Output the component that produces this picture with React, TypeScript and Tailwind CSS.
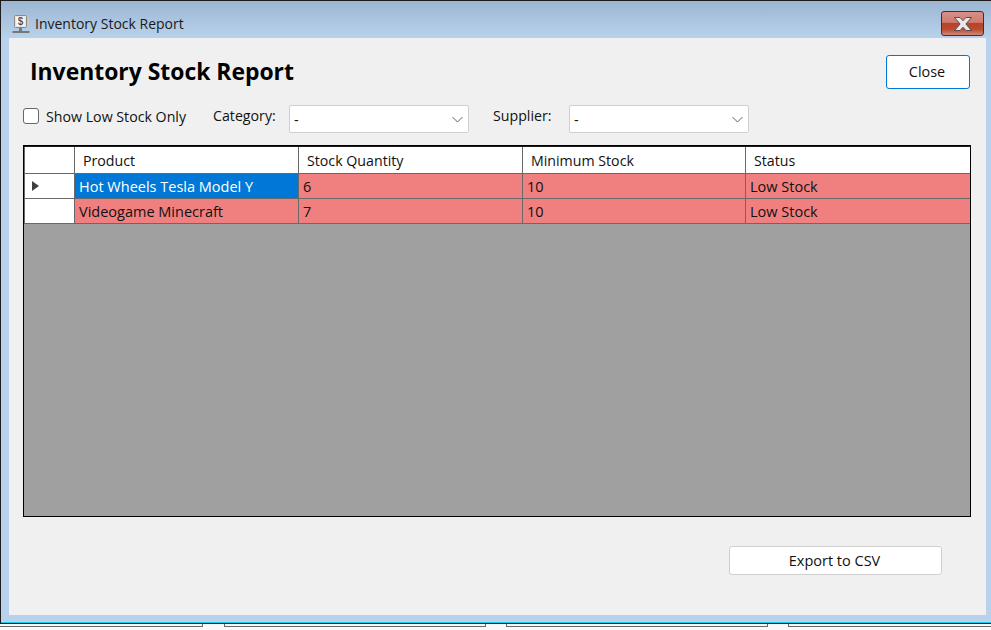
import React from 'react';

const rows = [
  { product: 'Hot Wheels Tesla Model Y', qty: '6', min: '10', status: 'Low Stock', selected: true },
  { product: 'Videogame Minecraft', qty: '7', min: '10', status: 'Low Stock', selected: false },
];

const headers = ['Product', 'Stock Quantity', 'Minimum Stock', 'Status'];
const gridCols = 'grid grid-cols-[51px_224px_224px_223px_224px]';

const AppIcon = () => (
  <svg width="18" height="19" viewBox="0 0 18 19" className="shrink-0">
    <rect x="2.5" y="1.5" width="12" height="12" rx="1" fill="#e4e4e4" stroke="#8a8a8a" />
    <rect x="4.5" y="3" width="8" height="9" fill="#ffffff" />
    <text x="8.5" y="11" textAnchor="middle" fontSize="10" fontWeight="700" fontFamily="Liberation Sans, sans-serif" fill="#555555">$</text>
    <rect x="15.5" y="4" width="1.5" height="7" fill="#c8c8c8" />
    <rect x="7" y="14" width="3" height="3" fill="#777777" />
    <rect x="0.5" y="17" width="17" height="2" fill="#777777" />
  </svg>
);

const CloseIcon = () => (
  <svg width="20" height="16" viewBox="0 0 20 16">
    <path d="M1.5 1.5h5.5l3 3.2 3-3.2h5.5l-5.6 6.5 5.6 6.5h-5.5l-3-3.2-3 3.2H1.5l5.6-6.5z" fill="#e8e8ea" stroke="#5a4a4e" strokeWidth="1" />
  </svg>
);

const Chevron = () => (
  <svg width="11" height="7" viewBox="0 0 11 7" fill="none" className="shrink-0">
    <path d="M0.5 1l5 5 5-5" stroke="#606060" strokeWidth="1" />
  </svg>
);

const Combo = () => (
  <div className="flex h-[28px] w-[180px] items-center justify-between rounded-[2px] border border-[#d0d0d0] bg-white pl-1 pr-[5px]">
    <span className="pt-[3px] leading-none">-</span>
    <Chevron />
  </div>
);

const App: React.FC = () => {
  return (
    <div className="flex h-[630px] w-[991px] flex-col overflow-hidden bg-[#f9f9f9] font-['Open_Sans','Noto_Sans',sans-serif] text-[14.5px] text-[#111111]">
      {/* Window frame */}
      <div className="flex h-[624px] shrink-0 flex-col border-b border-l border-t border-[#1c1c1c] bg-[#b8d1ec] shadow-[inset_0_-1px_0_#19d3ee]">
        {/* Title bar */}
        <div className="flex h-[37px] shrink-0 items-start bg-gradient-to-b from-[#9cb5d1] to-[#b9d2ec] pl-[11px] pr-[7px]">
          <div className="mt-[13px]">
            <AppIcon />
          </div>
          <span className="ml-[5px] mt-[13px] text-[14px] leading-[20px] text-[#1a1a1a]">Inventory Stock Report</span>
          <button className="ml-auto mt-[10px] flex h-[25px] w-[43px] items-center justify-center rounded-[3px] border border-[#5e2030] bg-[linear-gradient(#d98f85_0%,#cf7b70_45%,#b8442b_50%,#bb4a2e_75%,#d08a78_100%)]">
            <CloseIcon />
          </button>
        </div>

        {/* Dialog body */}
        <div className="ml-[8px] mr-[5px] h-[577px] bg-[#f0f0f0] pl-[14px]">
          <div className="flex items-start justify-between pr-[16px] pt-[17px]">
            <h1 className="pl-[7px] text-[22.9px] font-bold leading-[34px] text-black">Inventory Stock Report</h1>
            <button className="h-[34px] w-[84px] rounded-[3px] border border-[#0078d7] bg-white pr-[2px] text-[14.4px]">Close</button>
          </div>

          {/* Filters */}
          <div className="mt-[16px] flex h-[28px] items-start">
            <span className="mt-[3px] h-[16px] w-[16px] rounded-[3px] border border-[#666666] bg-white" />
            <span className="ml-[7px] mt-[2px] w-[167px] text-[14.2px] leading-[20px]">Show Low Stock Only</span>
            <span className="mt-px w-[76px] text-[14.2px] leading-[20px]">Category:</span>
            <Combo />
            <span className="ml-[24px] mt-px w-[76px] text-[14.2px] leading-[20px]">Supplier:</span>
            <Combo />
          </div>

          {/* Grid */}
          <div className="mt-[12px] h-[372px] w-[948px] border border-black bg-[#a0a0a0]">
            <div className={`${gridCols} h-[28px] border-t border-[#1c1c1c] bg-white text-[14.2px]`}>
              <div className="border-b border-l border-r border-[#696969]" />
              {headers.map(h => (
                <div key={h} className="flex items-center border-b border-r border-[#696969] pl-2 pt-px last:border-r-0">
                  {h}
                </div>
              ))}
            </div>
            {rows.map(row => (
              <div key={row.product} className={`${gridCols} h-[25px]`}>
                <div className="flex items-center border-b border-l border-r border-[#696969] bg-white pl-[7px]">
                  {row.selected && (
                    <svg width="7" height="10" viewBox="0 0 7 10">
                      <path d="M0 0l7 5-7 5z" fill="#404040" />
                    </svg>
                  )}
                </div>
                <div className={`flex items-center border-b border-r border-[#696969] pl-1 pt-px ${row.selected ? 'bg-[#0078d7] text-white' : 'bg-[#f08080]'}`}>
                  {row.product}
                </div>
                <div className="flex items-center border-b border-r border-[#696969] bg-[#f08080] pl-1 pt-px">{row.qty}</div>
                <div className="flex items-center border-b border-r border-[#696969] bg-[#f08080] pl-1 pt-px">{row.min}</div>
                <div className="flex items-center border-b border-[#696969] bg-[#f08080] pl-1 pt-px">{row.status}</div>
              </div>
            ))}
          </div>

          <div className="mt-[29px] flex justify-end pr-[44px]">
            <button className="h-[29px] w-[213px] rounded-[3px] border border-[#d0d0d0] bg-white pr-[2px]">Export to CSV</button>
          </div>
        </div>
      </div>

      {/* Window behind the dialog */}
      <div className="flex h-[3px] shrink-0">
        <div className="w-[203px] border-b border-r border-[#696969]" />
        <div className="w-[21px]" />
        <div className="w-[262px] border-b border-l border-r border-[#696969]" />
        <div className="w-[20px]" />
        <div className="w-[262px] border-b border-l border-r border-[#696969]" />
        <div className="w-[20px]" />
        <div className="flex-1 border-b border-l border-[#696969]" />
      </div>
    </div>
  );
};

export default App;
